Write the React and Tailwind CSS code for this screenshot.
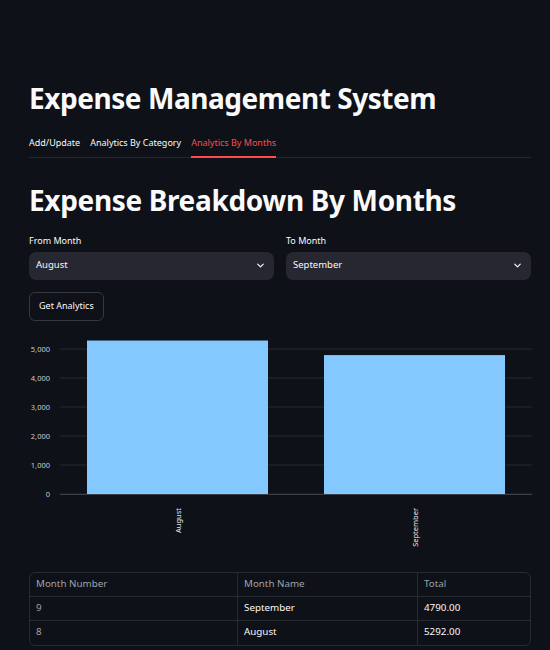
import React from "react";

function Chevron() {
  return (
    <svg width="11" height="11" viewBox="0 0 24 24" fill="none" stroke="#fafafa" strokeWidth="2.6" strokeLinecap="round" strokeLinejoin="round">
      <path d="M6 9l6 6 6-6" />
    </svg>
  );
}

function Select({ value }) {
  return (
    <div className="flex h-[28px] items-center justify-between rounded-[7px] bg-[#262730] pl-[7px] pr-[8px] text-[9.5px] text-[#fafafa]">
      <span>{value}</span>
      <Chevron />
    </div>
  );
}

function Chart() {
  const ticks = [0, 1000, 2000, 3000, 4000, 5000];
  const y0 = 159;
  const k = 0.029;
  return (
    <svg width="502" height="220" viewBox="0 0 502 220" className="block overflow-visible">
      {ticks.map((t) => (
        <g key={t}>
          <line x1="31" x2="503" y1={y0 - t * k} y2={y0 - t * k} stroke="#262a31" strokeWidth="1" />
          <text x="21" y={y0 - t * k + 3} textAnchor="end" fontSize="7.5" fill="#c6cbd2" fontFamily="'Noto Sans', sans-serif">
            {t.toLocaleString("en-US")}
          </text>
        </g>
      ))}
      <rect x="58" y={y0 - 5292 * k} width="181" height={5292 * k} fill="#83c9ff" />
      <rect x="295" y={y0 - 4790 * k} width="181" height={4790 * k} fill="#83c9ff" />
      <line x1="31" x2="503" y1={y0 + 0.5} y2={y0 + 0.5} stroke="#3b3f47" strokeWidth="1" />
      <text transform={`translate(152 ${y0 + 14}) rotate(-90)`} textAnchor="end" fontSize="7.5" fill="#e6e9ee" fontFamily="'Noto Sans', sans-serif">
        August
      </text>
      <text transform={`translate(389 ${y0 + 14}) rotate(-90)`} textAnchor="end" fontSize="7.5" fill="#e6e9ee" fontFamily="'Noto Sans', sans-serif">
        September
      </text>
    </svg>
  );
}

const cell = "flex h-[24px] items-center px-[6px] border-[#262a31]";

export default function App() {
  return (
    <div className="min-h-[650px] w-[550px] overflow-hidden bg-[#0e1117] text-[#fafafa]" style={{ fontFamily: "'Noto Sans', sans-serif" }}>
      <div className="pl-[29px] pr-[19px] pt-[80px]">
        <h1 className="text-[28px] font-bold leading-[36px] tracking-[-0.45px]">Expense Management System</h1>
        <div className="mt-[20px] flex gap-[10px] border-b border-[#262730] text-[9px]">
          <div className="pb-[7px]">Add/Update</div>
          <div className="pb-[7px]">Analytics By Category</div>
          <div className="-mb-px border-b-2 border-[#ff4b4b] pb-[6px] text-[#ff4b4b]">Analytics By Months</div>
        </div>
        <h2 className="mt-[24px] text-[28px] font-bold leading-[36px] tracking-[-0.35px]">Expense Breakdown By Months</h2>
        <div className="mt-[16px] grid grid-cols-2 gap-[12px]">
          <div>
            <div className="mb-[5px] text-[9px] leading-[13px]">From Month</div>
            <Select value="August" />
          </div>
          <div>
            <div className="mb-[5px] text-[9px] leading-[13px]">To Month</div>
            <Select value="September" />
          </div>
        </div>
        <button className="mt-[12px] flex h-[29px] items-center rounded-[6px] border border-[#353843] px-[9px] text-[9px] text-[#fafafa]">
          Get Analytics
        </button>
        <div className="mt-[14px]">
          <Chart />
        </div>
        <div className="mt-[17px] overflow-hidden rounded-[6px] border border-[#262a31] text-[9.8px]">
          <div className="grid grid-cols-[208px_180px_1fr]">
            <div className={`${cell} border-b border-r text-[#9ea2aa]`}>Month Number</div>
            <div className={`${cell} border-b border-r text-[#9ea2aa]`}>Month Name</div>
            <div className={`${cell} border-b text-[#9ea2aa]`}>Total</div>
            <div className={`${cell} border-b border-r text-[#9ea2aa]`}>9</div>
            <div className={`${cell} border-b border-r text-[#fafafa]`}>September</div>
            <div className={`${cell} border-b text-[#fafafa]`}>4790.00</div>
            <div className={`${cell} border-r text-[#9ea2aa]`}>8</div>
            <div className={`${cell} border-r text-[#fafafa]`}>August</div>
            <div className={`${cell} text-[#fafafa]`}>5292.00</div>
          </div>
        </div>
      </div>
    </div>
  );
}
